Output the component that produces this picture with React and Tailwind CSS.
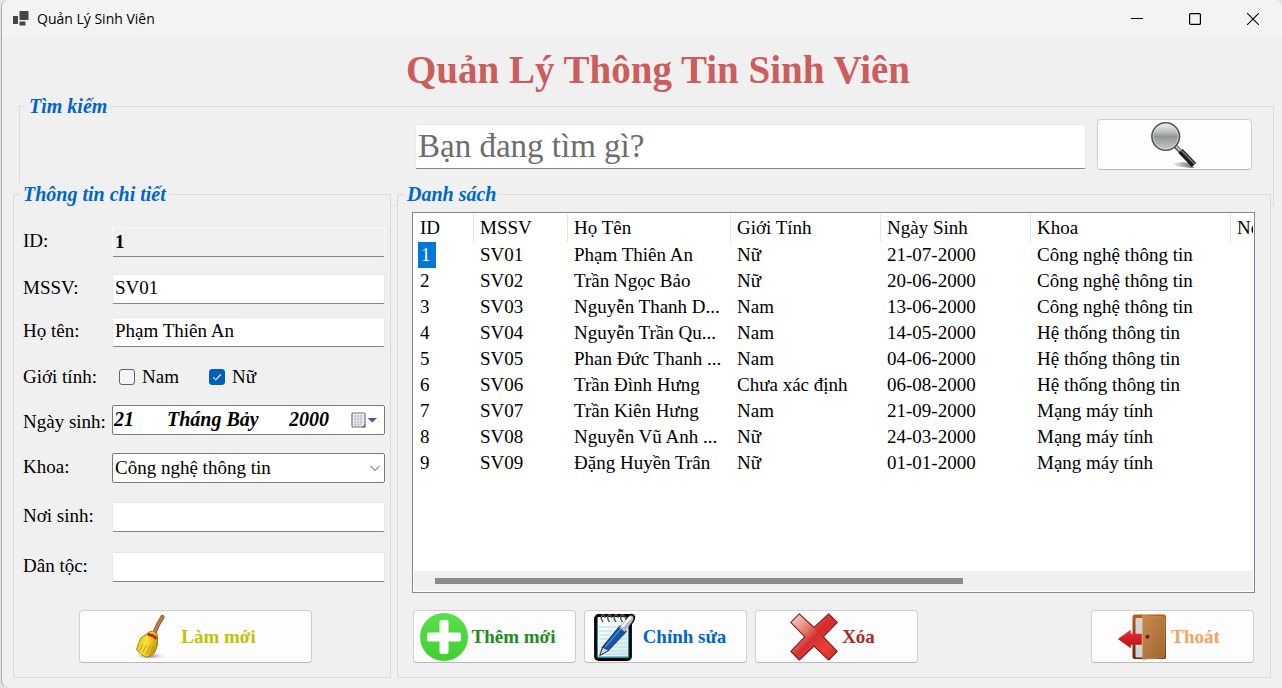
import { useState } from "react";

const STUDENTS = [
  ["1", "SV01", "Phạm Thiên An", "Nữ", "21-07-2000", "Công nghệ thông tin"],
  ["2", "SV02", "Trần Ngọc Bảo", "Nữ", "20-06-2000", "Công nghệ thông tin"],
  ["3", "SV03", "Nguyễn Thanh D...", "Nam", "13-06-2000", "Công nghệ thông tin"],
  ["4", "SV04", "Nguyễn Trần Qu...", "Nam", "14-05-2000", "Hệ thống thông tin"],
  ["5", "SV05", "Phan Đức Thanh ...", "Nam", "04-06-2000", "Hệ thống thông tin"],
  ["6", "SV06", "Trần Đình Hưng", "Chưa xác định", "06-08-2000", "Hệ thống thông tin"],
  ["7", "SV07", "Trần Kiên Hưng", "Nam", "21-09-2000", "Mạng máy tính"],
  ["8", "SV08", "Nguyễn Vũ Anh ...", "Nữ", "24-03-2000", "Mạng máy tính"],
  ["9", "SV09", "Đặng Huyền Trân", "Nữ", "01-01-2000", "Mạng máy tính"],
];

const COLUMNS = ["ID", "MSSV", "Họ Tên", "Giới Tính", "Ngày Sinh", "Khoa", "Nơi Sinh"];

function AppIcon() {
  return (
    <svg width="16" height="16" viewBox="0 0 16 16" fill="#444">
      <rect x="0" y="5" width="5" height="8" />
      <rect x="6.500" y="0" width="9" height="9" />
      <rect x="6.500" y="10.500" width="6" height="4" />
    </svg>
  );
}

function SearchIcon() {
  return (
    <svg width="48" height="48" viewBox="0 0 48 48">
      <defs>
        <linearGradient id="lens" x1="0" y1="0" x2="0" y2="1">
          <stop offset="0" stopColor="#f4f4f4" />
          <stop offset="0.35" stopColor="#b9bcbb" />
          <stop offset="0.5" stopColor="#929796" />
          <stop offset="1" stopColor="#c6caca" />
        </linearGradient>
        <linearGradient id="lensShadow">
          <stop offset="0" stopColor="#fff" />
          <stop offset="1" stopColor="#666" />
        </linearGradient>
      </defs>
      <path d="M21 43.500 Q30 40 40 42 L44 47 Q30 46 21 43.500Z" fill="url(#lensShadow)" />
      <path d="M25 25 L31 31" stroke="#55585c" strokeWidth="4" />
      <path d="M25.500 25 L31 30.500" stroke="#d5d8dd" strokeWidth="1.500" />
      <path d="M30.500 30 L44 44" stroke="#1b1b1b" strokeWidth="6" />
      <path d="M31.500 29.500 L45 43.500" stroke="#85878c" strokeWidth="1.200" />
      <circle cx="15.700" cy="15.500" r="13.800" fill="url(#lens)" stroke="#505355" strokeWidth="1.600" />
      <circle cx="15.700" cy="15.500" r="12.500" fill="none" stroke="#dde0e0" strokeWidth="0.700" />
    </svg>
  );
}

function BroomIcon() {
  return (
    <svg width="48" height="48" viewBox="0 0 48 48">
      <defs>
        <linearGradient id="straw" x1="0" y1="0" x2="1" y2="0.4">
          <stop offset="0" stopColor="#e3b90c" />
          <stop offset="0.55" stopColor="#fbe53c" />
          <stop offset="1" stopColor="#c79a08" />
        </linearGradient>
        <radialGradient id="broomShadow">
          <stop offset="0" stopColor="#777" />
          <stop offset="1" stopColor="#fff" stopOpacity="0" />
        </radialGradient>
      </defs>
      <ellipse cx="21" cy="43" rx="18" ry="4" fill="url(#broomShadow)" />
      <path d="M33.500 4 Q28 12 25 21" fill="none" stroke="#8a4a2b" strokeWidth="4" strokeLinecap="round" />
      <path d="M33.500 4 Q28 12 25 21" fill="none" stroke="#c07a52" strokeWidth="2.600" strokeLinecap="round" />
      <path
        d="M21 18.500 Q26 17.500 28.500 22 L28.500 32 L25.500 40 L18 44.500 L12 41.500 L7.500 36.500 L11.500 25.500Z"
        fill="url(#straw)"
        stroke="#a78109"
        strokeWidth="1"
      />
      <path d="M18.500 21.500 Q24 21.500 27.500 26" fill="none" stroke="#d42020" strokeWidth="2.800" />
      <path
        d="M14 31 L10.500 38 M17.500 32 L13.500 40 M21 33 L17 41.500 M24.500 33 L20.500 41"
        stroke="#b8920c"
        strokeWidth="0.900"
        fill="none"
      />
    </svg>
  );
}

function AddIcon() {
  return (
    <svg width="48" height="48" viewBox="0 0 48 48">
      <defs>
        <linearGradient id="add" x1="0" y1="0" x2="0" y2="1">
          <stop offset="0" stopColor="#5ae04e" />
          <stop offset="1" stopColor="#3fd02f" />
        </linearGradient>
      </defs>
      <circle cx="24" cy="24" r="24" fill="url(#add)" />
      <rect x="7" y="19.500" width="34" height="9" rx="2" fill="#fff" />
      <rect x="19.500" y="7" width="9" height="34" rx="2" fill="#fff" />
    </svg>
  );
}

function NoteIcon() {
  return (
    <svg width="48" height="48" viewBox="0 0 48 48">
      <defs>
        <linearGradient id="paper" x1="0" y1="0" x2="1" y2="1">
          <stop offset="0" stopColor="#fff" />
          <stop offset="1" stopColor="#d8ecf0" />
        </linearGradient>
      </defs>
      <rect x="4.500" y="2.500" width="35" height="44" rx="3" fill="#1c93ad" stroke="#000" strokeWidth="2.800" />
      <rect x="7" y="4" width="30" height="39.500" fill="url(#paper)" />
      <path
        d="M8 14h28M8 18h28M8 22h28M8 26h28M8 30h28M8 34h28M8 38h28M8 41h28"
        stroke="#b3dbe3"
        strokeWidth="1"
      />
      <path
        d="M12 9 Q9 5 11 2 Q14 1 14 5 M18.500 9 Q15.500 5 17.500 2 Q20.500 1 20.500 5 M25 9 Q22 5 24 2 Q27 1 27 5 M31.500 9 Q28.500 5 30.500 2 Q33.500 1 33.500 5"
        fill="none"
        stroke="#555"
        strokeWidth="1.500"
      />
      <path d="M34 6 L37.500 1.500 Q42 -.5 44 3 Q45 6 42 10 L38 14Z" fill="#000" />
      <path d="M8 43.500 L11 34 L29 12 L36 18.500 L17 38.500Z" fill="#23313d" />
      <path d="M28 14.500 L37 4 Q40.500 1.500 42 3.500 Q43.500 6 41 9 L33.500 19.500Z" fill="#b4bbc2" />
      <path d="M31 14 L40 4" stroke="#fff" strokeWidth="2" />
      <path d="M12 35 L28 14.500 L34.500 19.500 L17 37.500Z" fill="#1257a8" />
      <path d="M14 34 L29.500 16" stroke="#3f88d6" strokeWidth="1.500" />
      <path d="M9.500 41.500 L12 35 L17 37.500Z" fill="#d4d8dc" />
    </svg>
  );
}

function DeleteIcon() {
  return (
    <svg width="48" height="48" viewBox="0 0 48 48">
      <defs>
        <linearGradient id="del" x1="0" y1="0" x2="1" y2="1">
          <stop offset="0.05" stopColor="#f6d0c8" />
          <stop offset="0.35" stopColor="#e4756a" />
          <stop offset="0.5" stopColor="#d62f2f" />
          <stop offset="0.75" stopColor="#ee3f38" />
          <stop offset="1" stopColor="#c62323" />
        </linearGradient>
      </defs>
      <path
        d="M9.300 .8 L.8 9.300 L14.800 23.800 L.8 38.300 L9.300 47 L24 33 L38.700 47 L47.300 38.300 L33.300 23.800 L47.300 9.300 L38.700 .8 L24 14.500Z"
        fill="url(#del)"
        stroke="#7c1d1a"
        strokeWidth="1.100"
        strokeLinejoin="round"
      />
      <path d="M38.500 2.500 L24.500 16 L32 23 L46 9.500Z" fill="#d92a2c" opacity="0.700" />
    </svg>
  );
}

function ExitIcon() {
  return (
    <svg width="50" height="48" viewBox="0 0 50 48">
      <defs>
        <linearGradient id="door" x1="0" y1="0" x2="1" y2="1">
          <stop offset="0" stopColor="#c98a50" />
          <stop offset="1" stopColor="#a0642f" />
        </linearGradient>
        <linearGradient id="frame" x1="0" y1="0" x2="0" y2="1">
          <stop offset="0" stopColor="#b85f14" />
          <stop offset="1" stopColor="#6b2204" />
        </linearGradient>
        <linearGradient id="arrow" x1="0" y1="0" x2="0" y2="1">
          <stop offset="0" stopColor="#f0303a" />
          <stop offset="1" stopColor="#b30f12" />
        </linearGradient>
      </defs>
      <rect x="15.500" y="1.500" width="33.500" height="44.500" rx="2.500" fill="url(#frame)" />
      <rect x="18.500" y="5" width="9" height="39.500" rx="1" fill="#d3d4d6" />
      <path
        d="M25.500 2.500 L46 4 Q47.800 4.500 47.800 7 V42 Q47.800 44.500 46 44.800 L25.500 46.500Z"
        fill="url(#door)"
        stroke="#d99b64"
        strokeWidth="0.600"
      />
      <path d="M.8 26 L13.800 16.800 V20.800 H24.800 V31.800 H13.800 V35.200Z" fill="url(#arrow)" />
      <circle cx="30.500" cy="23.700" r="2" fill="#5d2508" />
    </svg>
  );
}

function CalendarIcon() {
  return (
    <svg width="28" height="17" viewBox="0 0 28 17">
      <rect x="1" y="1" width="13" height="14" rx="1" fill="#f2f3f6" stroke="#77716d" strokeWidth="1.200" />
      <path d="M3 4h9M3 7h9M3 10h9M3 13h7M4 3v10M7 3v10M10 3v10" stroke="#b3bdcf" strokeWidth="1" />
      <path d="M10.500 15.500 L14.500 11.500 V15.500Z" fill="#77716d" />
      <path d="M16.500 6 H26 L21.300 10.500Z" fill="#44598c" />
    </svg>
  );
}

function Group({ title, className, children }) {
  return (
    <div className={`bg-[#f0f0f0] ${className}`}>
      <fieldset className="h-full min-w-0 border border-[#dcdcdc]">
        <legend className="ml-1.5 px-[3px] text-[20px] leading-[22px] font-bold text-[#0066cc] italic">{title}</legend>
        {children}
      </fieldset>
    </div>
  );
}

function TextField({ id, label, defaultValue, readOnly }) {
  return (
    <div className="flex items-start">
      <label htmlFor={id} className="w-[89px] shrink-0 leading-[28px]">{label}</label>
      <input
        id={id}
        type="text"
        defaultValue={defaultValue}
        readOnly={readOnly}
        className={`h-[30px] min-w-0 flex-1 rounded-[2px] border border-b-[#868686] px-0.5 outline-none ${
          readOnly
            ? "border-[#fafafa] bg-[#f0f0f0] font-bold"
            : "border-[#e8e8e8] bg-white pb-0.5"
        }`}
      />
    </div>
  );
}

function CheckField({ label, checked, onChange }) {
  return (
    <label className="flex items-center gap-[7px]">
      <span className="relative flex">
        <input
          type="checkbox"
          checked={checked}
          onChange={onChange}
          className="h-4 w-4 appearance-none rounded-[3px] border border-[#626262] bg-[#f5f5f5] checked:border-[#005fb8] checked:bg-[#005fb8]"
        />
        {checked && (
          <svg className="pointer-events-none absolute inset-0" width="16" height="16" viewBox="0 0 16 16">
            <path d="M4.300 8.300 L6.800 10.800 L11.800 5.500" fill="none" stroke="#fff" strokeWidth="1.100" />
          </svg>
        )}
      </span>
      {label}
    </label>
  );
}

function ActionButton({ icon, label, className }) {
  return (
    <button
      type="button"
      className={`flex h-[53px] items-center justify-center gap-1 rounded-[4px] border border-[#d0d0d0] border-b-[#bababa] bg-[#fdfdfd] font-bold ${className}`}
    >
      {icon}
      <span className="pt-0.5">{label}</span>
    </button>
  );
}

export default function App() {
  const [gender, setGender] = useState("Nữ");
  return (
    <div className="min-h-screen bg-[#e3e3e3] pl-px">
      <div className="flex min-h-screen flex-col overflow-hidden rounded-l-lg rounded-tr-lg border-l border-[#ababab] bg-[#f0f0f0] font-['Liberation_Serif',serif] text-[19px] text-black">
        <header className="flex h-[37px] items-center bg-[#f3f3f3] pl-[11px]">
          <AppIcon />
          <span className="ml-2 flex-1 font-['Open_Sans','Noto_Sans',sans-serif] text-[14px] leading-5">Quản Lý Sinh Viên</span>
          <button type="button" aria-label="Thu nhỏ" className="flex h-full w-[58px] items-center justify-center">
            <svg width="12" height="12" viewBox="0 0 12 12" stroke="#000"><path d="M0 5.500H12" /></svg>
          </button>
          <button type="button" aria-label="Phóng to" className="flex h-full w-[58px] items-center justify-center">
            <svg width="12" height="12" viewBox="0 0 12 12" fill="none" stroke="#000" strokeWidth="1.200"><rect x=".6" y=".6" width="10.800" height="10.800" rx="1" /></svg>
          </button>
          <button type="button" aria-label="Đóng" className="flex h-full w-[58px] items-center justify-center">
            <svg width="12" height="12" viewBox="0 0 12 12" stroke="#000" strokeWidth="1.100"><path d="M0 0L12 12M12 0L0 12" /></svg>
          </button>
        </header>

        <h1 className="flex h-[58px] items-center justify-center pt-1.5 pl-8 text-[39px] leading-none font-bold text-[#cd5c5c]">
          Quản Lý Thông Tin Sinh Viên
        </h1>

        <Group title="Tìm kiếm" className="mr-2 ml-[17px] h-[111px]">
          <div className="flex items-end gap-[11px] pt-0.5 pr-[21px] pl-[395px]">
            <input
              type="search"
              aria-label="Tìm kiếm"
              placeholder="Bạn đang tìm gì?"
              className="mb-px h-[45px] min-w-0 flex-1 rounded-[2px] border border-[#e8e8e8] border-b-[#868686] bg-white px-0.5 text-[33px] leading-none outline-none placeholder:text-[#6d6d6d]"
            />
            <button
              type="button"
              aria-label="Tìm"
              className="flex h-[51px] w-[155px] items-center justify-center rounded-[4px] border border-[#d0d0d0] border-b-[#bababa] bg-[#fdfdfd] pr-0.5"
            >
              <SearchIcon />
            </button>
          </div>
        </Group>

        <main className="relative -mt-[23px] flex flex-1 gap-1.5 pr-[11px] pb-2.5 pl-[11px]">
          <Group title="Thông tin chi tiết" className="w-[378px] shrink-0">
            <form className="flex flex-col pt-[22px] pr-[5px] pb-3.5 pl-[9px]">
              <div className="grid grid-rows-[47px_43px_45px_43px_48px_49px_50px_30px]">
                <TextField id="id" label="ID:" defaultValue="1" readOnly />
                <TextField id="mssv" label="MSSV:" defaultValue="SV01" />
                <TextField id="name" label="Họ tên:" defaultValue="Phạm Thiên An" />
                <div className="flex h-[30px] items-center">
                  <span className="w-24 leading-[28px]">Giới tính:</span>
                  <div className="flex gap-[30px]">
                    <CheckField label="Nam" checked={gender === "Nam"} onChange={() => setGender("Nam")} />
                    <CheckField label="Nữ" checked={gender === "Nữ"} onChange={() => setGender("Nữ")} />
                  </div>
                </div>
                <div className="flex items-start">
                  <label htmlFor="day" className="w-[89px] shrink-0 leading-[34px] whitespace-nowrap">Ngày sinh:</label>
                  <div className="flex h-[30px] min-w-0 flex-1 items-center rounded-[2px] border border-[#7a7a7a] bg-white pr-[5px] pl-px text-[20px] font-bold italic">
                    <input id="day" defaultValue="21" className="w-[53px] pb-0.5 outline-none" />
                    <input aria-label="Tháng" defaultValue="Tháng Bảy" className="w-[122px] pb-0.5 outline-none" />
                    <input aria-label="Năm" defaultValue="2000" className="w-12 pb-0.5 outline-none" />
                    <button type="button" aria-label="Mở lịch" className="ml-auto"><CalendarIcon /></button>
                  </div>
                </div>
                <div className="flex items-start">
                  <label htmlFor="khoa" className="w-[89px] shrink-0 leading-[28px]">Khoa:</label>
                  <div className="relative flex-1">
                    <select
                      id="khoa"
                      className="h-[30px] w-full appearance-none rounded-[2px] border border-[#7a7a7a] bg-white px-0.5 pb-0.5 outline-none"
                    >
                      <option>Công nghệ thông tin</option>
                      <option>Hệ thống thông tin</option>
                      <option>Mạng máy tính</option>
                    </select>
                    <svg className="pointer-events-none absolute top-3 right-[5px]" width="10" height="7" viewBox="0 0 10 7">
                      <path d="M.5 1 L5 5.500 L9.500 1" fill="none" stroke="#555" />
                    </svg>
                  </div>
                </div>
                <TextField id="place" label="Nơi sinh:" defaultValue="" />
                <TextField id="ethnic" label="Dân tộc:" defaultValue="" />
              </div>
              <ActionButton icon={<BroomIcon />} label="Làm mới" className="mt-7 mr-[73px] ml-14 pr-1.5 text-[#c3c300]" />
            </form>
          </Group>

          <Group title="Danh sách" className="min-w-0 flex-1">
            <div className="pt-[7px] pr-[15px] pb-3.5 pl-3.5">
              <div className="flex h-[381px] flex-col overflow-hidden border border-[#828790] bg-white p-px">
                <div className="min-h-0 flex-1 overflow-hidden">
                  <table className="w-[1000px] table-fixed border-separate border-spacing-0 text-left whitespace-nowrap">
                    <colgroup>
                      <col className="w-[60px]" />
                      <col className="w-[94px]" />
                      <col className="w-[163px]" />
                      <col className="w-[150px]" />
                      <col className="w-[150px]" />
                      <col className="w-[200px]" />
                      <col />
                    </colgroup>
                    <thead>
                      <tr className="h-7 leading-7">
                        {COLUMNS.map((c) => (
                          <th key={c} className="border-r border-[#e5e5e5] pl-1.5 font-normal">{c}</th>
                        ))}
                      </tr>
                    </thead>
                    <tbody>
                      {STUDENTS.map((row, i) => (
                        <tr key={row[0]} className="h-[26px] leading-[26px]">
                          {row.map((cell, j) => (
                            <td key={j} className={j === 0 ? "pl-1" : "pl-1.5"}>
                              {j === 0 ? (
                                <span className={i === 0 ? "block w-[18px] bg-[#0078d7] pl-[3px] text-white" : "block pl-0.5"}>{cell}</span>
                              ) : (
                                cell
                              )}
                            </td>
                          ))}
                          <td />
                        </tr>
                      ))}
                    </tbody>
                  </table>
                </div>
                <div className="flex h-5 items-center bg-[#f0f0f0] pl-[21px]">
                  <div className="h-1.5 w-[528px] bg-[#8a8a8a]" />
                </div>
              </div>
              <div className="mt-[17px] flex gap-2 px-px">
                <ActionButton icon={<AddIcon />} label="Thêm mới" className="w-[163px] pr-3.5 text-[#228b22]" />
                <ActionButton icon={<NoteIcon />} label="Chỉnh sửa" className="w-[163px] pr-3.5 text-[#0066cc]" />
                <ActionButton icon={<DeleteIcon />} label="Xóa" className="w-[163px] pr-2 text-[#a52a2a]" />
                <ActionButton icon={<ExitIcon />} label="Thoát" className="ml-auto w-[163px] pr-2 text-[#f4a460]" />
              </div>
            </div>
          </Group>
        </main>
      </div>
    </div>
  );
}
